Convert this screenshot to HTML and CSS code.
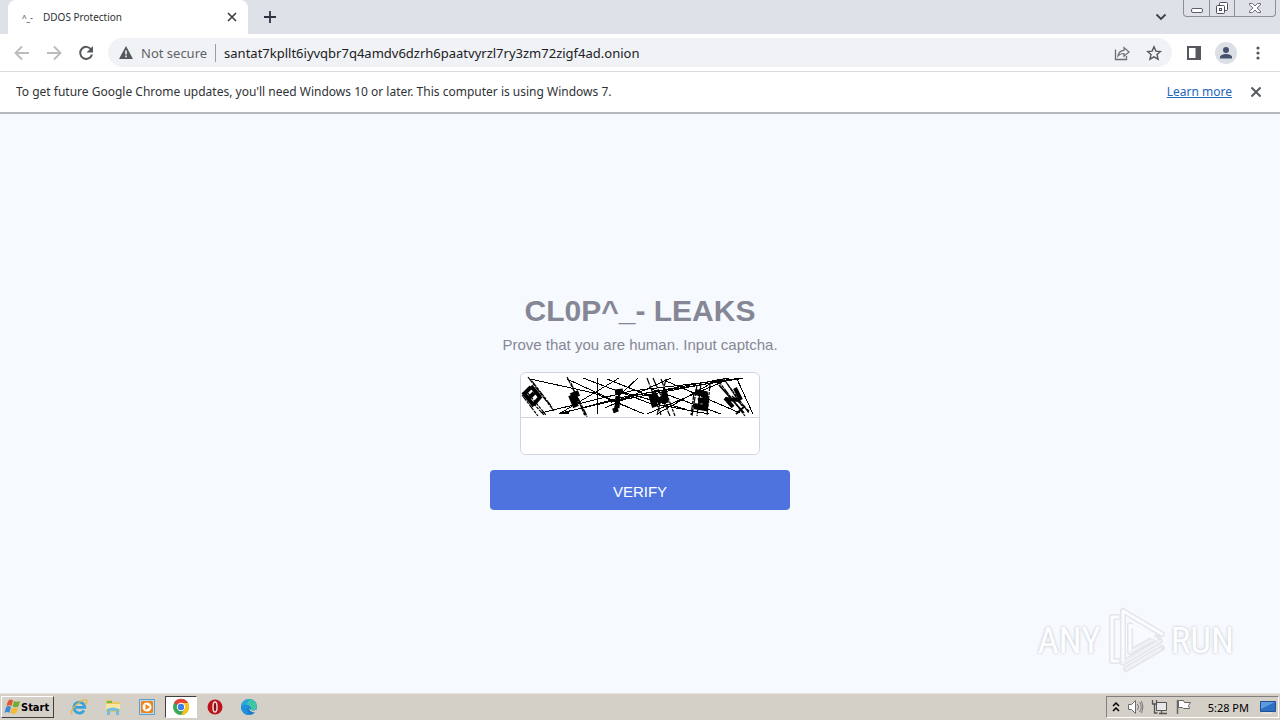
FILE: index.html
```html
<!DOCTYPE html>
<html lang="en">

<head>
    <meta charset="utf-8">
    <title>DDOS Protection</title>
    <link rel="stylesheet" href="styles.css">
</head>

<body>

    <!-- Tab strip -->
    <header class="tabstrip">
        <div class="tab">
            <span class="favicon">^_-</span>
            <span class="tab-title">DDOS Protection</span>
            <button class="icon-btn" aria-label="Close tab">
                <svg width="10" height="10" viewBox="0 0 10 10"><path d="M1 1l8 8M9 1l-8 8" stroke="#3c4043" stroke-width="1.7"/></svg>
            </button>
        </div>
        <button class="icon-btn new-tab" aria-label="New tab">
            <svg width="12" height="12" viewBox="0 0 12 12"><path d="M6 0v12M0 6h12" stroke="#2d3142" stroke-width="1.8"/></svg>
        </button>
        <button class="icon-btn tab-search" aria-label="Search tabs">
            <svg width="12" height="8" viewBox="0 0 12 8"><path d="M1.5 1.5L6 6l4.500-4.500" fill="none" stroke="#3c4043" stroke-width="1.8"/></svg>
        </button>
        <div class="window-buttons">
            <button aria-label="Minimize"><svg width="14" height="16" viewBox="0 0 14 16"><rect x="1.500" y="8.500" width="11" height="4" rx="1.500" fill="#fff" stroke="#5b5f6b"/></svg></button>
            <button aria-label="Restore"><svg width="14" height="16" viewBox="0 0 14 16"><rect x="4.500" y="2.500" width="8" height="8" rx="1" fill="#fff" stroke="#4b4f5b"/><rect x="1.500" y="5.500" width="8" height="8" rx="1" fill="#fff" stroke="#4b4f5b"/><rect x="4.500" y="8.500" width="2" height="2" fill="none" stroke="#4b4f5b"/></svg></button>
            <button class="wide" aria-label="Close"><svg width="14" height="16" viewBox="0 0 14 16"><path d="M1.500 3.500h3l2.500 2.500 2.500-2.500h3v1.500l-3.500 3 3.500 3v1.500h-3L7 10l-2.500 2.500h-3V11L5 8 1.500 5z" fill="#fff" stroke="#6b6f7b"/></svg></button>
        </div>
    </header>

    <!-- Toolbar -->
    <nav class="toolbar">
        <button class="icon-btn" aria-label="Back">
            <svg width="16" height="16" viewBox="0 0 16 16"><path d="M15 8H2M8 1.500L1.500 8 8 14.500" fill="none" stroke="#bbbcbe" stroke-width="1.900"/></svg>
        </button>
        <button class="icon-btn" aria-label="Forward">
            <svg width="16" height="16" viewBox="0 0 16 16"><path d="M1 8h13M8 1.500L14.500 8 8 14.500" fill="none" stroke="#bbbcbe" stroke-width="1.900"/></svg>
        </button>
        <button class="icon-btn" aria-label="Reload">
            <svg width="16" height="16" viewBox="0 0 16 16"><path d="M13.200 4.500A6 6 0 1 0 14 9.500" fill="none" stroke="#55585c" stroke-width="2"/><path d="M15 1v6.500H8.500z" fill="#55585c"/></svg>
        </button>
        <div class="omnibox">
            <svg width="14" height="13" viewBox="0 0 14 13"><path d="M7 0l7 13H0z" fill="#55585c"/><path d="M7 4.500v4M7 9.500v1.700" stroke="#fff" stroke-width="1.500"/></svg>
            <label class="security" for="address">Not secure</label>
            <input id="address" type="text" value="santat7kpllt6iyvqbr7q4amdv6dzrh6paatvyrzl7ry3zm72zigf4ad.onion">
            <button class="icon-btn" aria-label="Share">
                <svg width="16" height="16" viewBox="0 0 16 16"><path d="M1.500 4.500v10h11V11" fill="none" stroke="#6a6d71" stroke-width="1.300"/><path d="M4 11c.5-4 2.500-5.500 6-5.700V2.500L15 7l-5 4.200V8.500C7.500 8.500 5.500 9 4 11z" fill="none" stroke="#6a6d71" stroke-width="1.200"/></svg>
            </button>
            <button class="icon-btn" aria-label="Bookmark">
                <svg width="16" height="16" viewBox="0 0 16 16"><path d="M8 1.800l1.900 4.300 4.600.4-3.500 3.100 1.100 4.600L8 11.800l-4.100 2.400L5 9.600 1.500 6.500l4.600-.4z" fill="none" stroke="#55585c" stroke-width="1.400"/></svg>
            </button>
        </div>
        <button class="icon-btn" aria-label="Side panel">
            <svg width="16" height="16" viewBox="0 0 16 16"><rect x="2" y="2" width="12" height="12" fill="#fff" stroke="#55585c" stroke-width="2"/><path d="M9.500 2H14v12H9.500z" fill="#55585c"/></svg>
        </button>
        <button class="icon-btn avatar" aria-label="Profile">
            <svg width="22" height="22" viewBox="0 0 22 22"><circle cx="11" cy="11" r="11" fill="#dce0e6"/><circle cx="11" cy="8" r="3" fill="#47536e"/><path d="M5 16.500V15c0-2 3.500-3 6-3s6 1 6 3v1.500z" fill="#47536e"/></svg>
        </button>
        <button class="icon-btn" aria-label="Menu">
            <svg width="16" height="16" viewBox="0 0 16 16"><g fill="#55585c"><circle cx="8" cy="3" r="1.600"/><circle cx="8" cy="8" r="1.600"/><circle cx="8" cy="13" r="1.600"/></g></svg>
        </button>
    </nav>

    <!-- Update notice -->
    <div class="infobar">
        <p>To get future Google Chrome updates, you'll need Windows 10 or later. This computer is using Windows 7.</p>
        <a href="#">Learn more</a>
        <button class="icon-btn" aria-label="Dismiss">
            <svg width="12" height="12" viewBox="0 0 12 12"><path d="M1.500 1.500l9 9M10.500 1.500l-9 9" stroke="#55585c" stroke-width="1.900"/></svg>
        </button>
    </div>

    <!-- Page -->
    <main class="page">
        <form class="captcha-form">
            <h1>CL0P^_- LEAKS</h1>
            <label for="captcha">Prove that you are human. Input captcha.</label>
            <div class="captcha-box">
                <svg class="captcha-image" viewBox="0 0 238 44" role="img" aria-label="Captcha">
                    <g fill="none" stroke="#000" stroke-width="1" shape-rendering="crispEdges">
                        <path d="M9 6l64 14 50 21M20 40l90-22 112-13M40 40l86-20 92-14M38 41l60-16 110-20M46 6l65 30M62 5l66 25 60 11M86 6l50 20M98 5L38 41M76 5v36M117 5L90 30M150 5L84 35M126 41l80-34M136 41l60-34M100 27l100-19M145 8l74 32M130 16l70 25M216 6l16 35M104 20l60 16"/>
                    </g>
                    <g fill="none" stroke="#000" stroke-width="1.200" stroke-dasharray="7 1 3 1">
                        <path d="M7 4l26 34M11 8l20 26M1 22l16 21M5 18l20 24M10 28l13 14M46 4l20 40M50 10l14 33M57 25l9 18M93 40l2-12M126 5l14 37M132 5l17 38M140 6l14 37M145 6l-9 36M176 12l-5 31M180 10l-4 33M189 11l-3 32M173 20l-3 22M196 6l28 37M202 5l26 35M205 9l16 24M211 23l18 16"/>
                    </g>
                    <g fill="none" stroke="#000" stroke-width="4">
                        <path d="M2 19l11 14M4 20l6-6M8 25l5-5M13 31l7-8M10 13l9 11" stroke-width="4"/>
                        <path d="M50 22l5 12M50 23l8-3M54 27l3-2" stroke-width="6"/>
                        <path d="M94 19l8-1M97 23l-1 12M92 38l5-2" stroke-width="5"/>
                        <path d="M130 21l4 13M132 20l5 8M143 18l2 12M136 29l8-5" stroke-width="6"/>
                        <path d="M174 19l10 2 1 6-8 1M185 27l-1 8-11-2" stroke-width="6"/>
                        <path d="M204 25l8 9M204 26l15 1M214 15l6 12" stroke-width="4"/>
                    </g>
                    <path d="M198 12l25 28M224 33l-9 8M39 40h9" fill="none" stroke="#000" stroke-width="1.800"/>
                </svg>
                <input id="captcha" type="text" autocomplete="off">
            </div>
            <button class="verify" type="submit">VERIFY</button>
        </form>

        <div class="watermark">
            <span>ANY</span>
            <svg width="60" height="66" viewBox="0 0 60 66" fill="none" stroke-linejoin="round" stroke-linecap="round">
                <g stroke="#e3e5ea" stroke-width="6">
                    <path d="M12 10H6v44h6"/>
                    <path d="M17 4v52L54 34M17 4l39 23M24 18v27l28-15M20 62l36-21"/>
                </g>
                <g stroke="#fafcfe" stroke-width="3">
                    <path d="M12 10H6v44h6"/>
                    <path d="M17 56V4l39 23M24 45V18l26 14"/>
                </g>
                <path d="M17 56l37-22M24 45l24-13M20 62l34-20" stroke="#eff1f5" stroke-width="3"/>
            </svg>
            <span>RUN</span>
        </div>
    </main>

    <!-- Taskbar -->
    <footer class="taskbar">
        <button class="start">
            <svg width="18" height="16" viewBox="0 0 18 16"><path d="M5 2q3-2.500 5-.5L8.500 7q-2-1.500-5 0z" fill="#e4572e"/><path d="M11 2q3 1.500 6 0l-1.500 5.500q-3 1.500-6 0z" fill="#6fae35"/><path d="M3 8q3-2 5 0l-1.500 6q-2-2-5 0z" fill="#3f8ad8"/><path d="M9 8.500q3 1.500 6 0L13.500 14q-3 1.500-6 0z" fill="#f4b92f"/></svg>
            Start
        </button>
        <div class="apps">
            <button aria-label="Internet Explorer">
                <svg width="18" height="18" viewBox="0 0 18 18"><path d="M14 12.500a5.500 5.500 0 1 1 .8-3.200H4" fill="none" stroke="#36a3dc" stroke-width="2.800"/><path d="M2 16C-1 12 11 1 16 2c2 1 0 4-1 5" fill="none" stroke="#e5b83c" stroke-width="1.300"/></svg>
            </button>
            <button aria-label="Explorer">
                <svg width="18" height="18" viewBox="0 0 18 18"><path d="M2 2h6l1 2h7v10H2z" fill="#e8c75e"/><path d="M3 3h5v2H3z" fill="#76b852"/><path d="M2 6h14v5H2z" fill="#f7e6a1"/><path d="M3 17v-6q6-3 12 0v6h-3v-4H6v4z" fill="#75bce4"/></svg>
            </button>
            <button aria-label="Media Player">
                <svg width="18" height="18" viewBox="0 0 18 18"><path d="M1.500 1.500h15v15h-15z" fill="#b9dcf0" stroke="#5f9cc9"/><path d="M4 3h10l1 1v10l-1 1H4l-1-1V4z" fill="#f08317"/><circle cx="9" cy="9" r="4.500" fill="#fff"/><path d="M7.500 6l4.500 3-4.500 3z" fill="#f08317"/></svg>
            </button>
            <button class="active" aria-label="Chrome">
                <svg width="18" height="18" viewBox="0 0 18 18"><circle cx="9" cy="9" r="8" fill="#3da755"/><path d="M9 9L2 5a8 8 0 0 1 14 0z" fill="#e44234"/><path d="M9 9V5h7a8 8 0 0 1-7 12l4-7z" fill="#fbc117"/><circle cx="9" cy="9" r="4.200" fill="#fff"/><circle cx="9" cy="9" r="3.200" fill="#3f7de8"/></svg>
            </button>
            <button aria-label="Opera">
                <svg width="18" height="18" viewBox="0 0 18 18"><circle cx="9" cy="9" r="7.500" fill="#b9151b"/><ellipse cx="9" cy="9" rx="2" ry="5" fill="#861015" stroke="#f3dada" stroke-width="1.500"/></svg>
            </button>
            <button aria-label="Edge">
                <svg width="18" height="18" viewBox="0 0 18 18"><circle cx="9" cy="9" r="8" fill="#1679c9"/><path d="M1 9a8 8 0 0 1 16 0c0 3-3 4-6 3 1-5-7-7-10-3z" fill="#3fc5a8"/><path d="M1 9c0-4 4-8 9-8L6 7z" fill="#28a6dc"/><path d="M1 9c3-4 8-2 8 0-3 1-2 5 1 8A8 8 0 0 1 1 9z" fill="#1f91dc"/><path d="M9.500 9c-.5 3 3 4.500 7.500 2.500l1 1-2 2c-4 0-8-2-6.500-5.500z" fill="#d4d0c8"/></svg>
            </button>
        </div>
        <div class="tray">
            <svg width="8" height="12" viewBox="0 0 8 12"><path d="M1 5l3-3 3 3M1 10l3-3 3 3" fill="none" stroke="#000" stroke-width="1.500"/></svg>
            <svg width="18" height="16" viewBox="0 0 18 16"><path d="M2.500 5.500h3l4-4v13l-4-4h-3z" fill="#fff" stroke="#6d6d6d"/><path d="M11.500 5q2 3 0 6M13.500 3q3.500 5 0 10M15.500 2q3 6 0 12" fill="none" stroke="#777"/></svg>
            <svg width="18" height="16" viewBox="0 0 18 16"><path d="M6.500 3.500h10v8h-10z" fill="#e8e8e8" stroke="#555"/><path d="M9 14.500h8M11.500 12v2M2.500 1v4h4V1M4.500 5v9h3" fill="none" stroke="#555" stroke-width="1.300"/></svg>
            <svg width="18" height="16" viewBox="0 0 18 16"><path d="M4.500 1.500h5l1 2h6l-2 3 1 3h-6l-1-1h-4z" fill="#fff" stroke="#666"/><path d="M3.500 1v14" stroke="#666" stroke-width="1.500"/></svg>
            <time>5:28 PM</time>
            <svg width="16" height="14" viewBox="0 0 16 14"><path d="M.5 1.500h15v10H.5z" fill="#2c6fc4" stroke="#214f91"/><path d="M1 2h14L1 9z" fill="#5d9be0"/><path d="M2 13h10" stroke="#eee"/></svg>
        </div>
    </footer>

</body>

</html>
```
FILE: styles.css
```css
* {
    box-sizing: border-box;
}

body {
    margin: 0;
    min-height: 100vh;
    display: flex;
    flex-direction: column;
    font-family: "Noto Sans", "Open Sans", sans-serif;
    font-size: 12px;
    color: #303236;
}

button {
    margin: 0;
    padding: 0;
    border: 0;
    background: none;
    font: inherit;
    color: inherit;
}

svg {
    display: block;
    flex-shrink: 0;
}

.icon-btn {
    display: flex;
    align-items: center;
    justify-content: center;
}

/* Tab strip */
.tabstrip {
    display: flex;
    align-items: center;
    height: 34px;
    padding-left: 8px;
    background-color: #dee1e8;
}

.tab {
    display: flex;
    align-items: center;
    width: 240px;
    height: 34px;
    padding: 0 11px 0 14px;
    background-color: #fff;
    border-radius: 8px 8px 0 0;
    font-size: 10px;
}

.favicon {
    width: 21px;
    font-size: 8px;
}

.tab-title {
    flex: 1;
}

.new-tab {
    margin-left: 16px;
}

.tab-search {
    margin-left: auto;
    margin-right: 16px;
}

.window-buttons {
    display: flex;
    align-self: flex-start;
    height: 17px;
    margin-right: 4px;
    border: 1px solid #8b8f99;
    border-top: 0;
    border-radius: 0 0 4px 4px;
}

.window-buttons button {
    display: flex;
    justify-content: center;
    width: 25px;
}

.window-buttons button + button {
    border-left: 1px solid #8b8f99;
}

.window-buttons .wide {
    width: 41px;
}

/* Toolbar */
.toolbar {
    display: flex;
    align-items: center;
    gap: 16px;
    height: 38px;
    padding: 0 14px;
    background-color: #fff;
    border-bottom: 1px solid #d8dadd;
}

.omnibox {
    flex: 1;
    display: flex;
    align-items: center;
    height: 29px;
    margin: 0 -2px;
    padding: 0 10px 0 11px;
    gap: 16px;
    border-radius: 15px;
    background-color: #f0f2f5;
    font-size: 13px;
}

.security {
    margin-left: -8px;
    padding-right: 8px;
    border-right: 1px solid #9a9da1;
    line-height: 18px;
    color: #5f6368;
}

.omnibox input {
    flex: 1;
    min-width: 0;
    margin-left: -8px;
    padding: 0;
    border: 0;
    background: none;
    font: inherit;
    color: #202124;
    outline: none;
}

.avatar {
    margin: 0 -3px;
}

/* Update notice */
.infobar {
    display: flex;
    align-items: center;
    height: 42px;
    padding: 0 18px 1px 16px;
    background-color: #fff;
    border-bottom: 2px solid #b4b8bc;
}

.infobar p {
    flex: 1;
    margin: 0;
}

.infobar a {
    margin-right: 18px;
    color: #2566b8;
}

/* Page */
.page {
    position: relative;
    flex: 1;
    display: flex;
    align-items: center;
    justify-content: center;
    padding-bottom: 2px;
    background-color: #f6f9fd;
    font-family: "Liberation Sans", Arial, sans-serif;
    font-size: 15px;
    color: #858796;
}

.captcha-form {
    display: flex;
    flex-direction: column;
    align-items: center;
    width: 300px;
}

.captcha-form h1 {
    margin: 0 0 8px;
    font-size: 30px;
    line-height: 32px;
}

.captcha-form label {
    line-height: 20px;
}

.captcha-box {
    width: 240px;
    margin: 17px 0 15px;
    overflow: hidden;
    border: 1px solid #d1d3de;
    border-radius: 6px;
    background-color: #fff;
}

.captcha-image {
    width: 100%;
}

.captcha-box input {
    display: block;
    width: 100%;
    height: 37px;
    padding: 0 12px;
    border: 0;
    border-top: 1px solid #d1d3de;
    font: inherit;
    color: inherit;
    outline: none;
}

.verify {
    width: 100%;
    height: 40px;
    padding-top: 3px;
    border-radius: 4px;
    background-color: #4e73df;
    color: #fff;
}

.watermark {
    position: absolute;
    right: 46px;
    bottom: 20px;
    display: flex;
    align-items: center;
    gap: 5px;
    font-family: "Roboto Condensed", "Liberation Sans", sans-serif;
    font-size: 37px;
    color: #fdfeff;
    text-shadow: 0 0 3px #b9bdc4;
}

/* Taskbar */
.taskbar {
    display: flex;
    align-items: center;
    height: 27px;
    padding: 0 1px;
    border-top: 1px solid #e6e4df;
    background-color: #d4d0c8;
}

.start {
    display: flex;
    align-items: center;
    height: 22px;
    width: 53px;
    padding-left: 1px;
    border: 1px solid;
    border-color: #fff #404040 #404040 #fff;
    font-family: "DejaVu Sans Condensed", "DejaVu Sans", sans-serif;
    font-size: 11px;
    font-weight: bold;
    color: #000;
}

.apps {
    display: flex;
    gap: 2px;
    margin-left: 9px;
}

.apps button {
    display: flex;
    align-items: center;
    justify-content: center;
    width: 32px;
    height: 22px;
}

.apps .active {
    border: 1px solid;
    border-color: #404040 #fff #fff #404040;
    background-color: #fff;
}

.tray {
    display: flex;
    align-items: center;
    gap: 6px;
    height: 22px;
    margin-left: auto;
    padding: 0 2px 0 5px;
    border: 1px solid;
    border-color: #808080 #fff #fff #808080;
    font-size: 11px;
    color: #000;
}

.tray time {
    margin: 0 5px 0 10px;
}
```
